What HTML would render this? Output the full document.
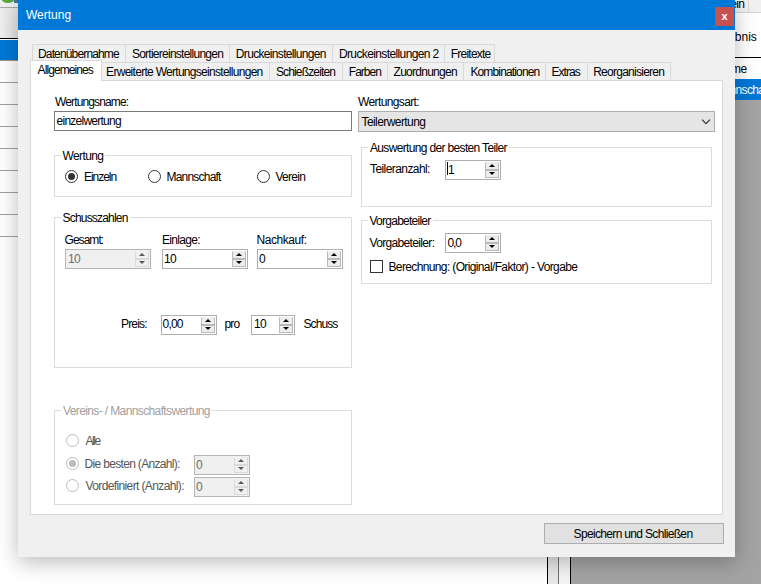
<!DOCTYPE html>
<html><head><meta charset="utf-8">
<style>
*{margin:0;padding:0;box-sizing:border-box}
html,body{width:761px;height:584px;overflow:hidden;background:#fff}
body{position:relative;font-family:"Liberation Sans",sans-serif;font-size:11px;color:#000}
.a{position:absolute}
.t{position:absolute;white-space:nowrap;font-size:12px;line-height:12px;letter-spacing:-0.62px;color:#000}
/* background app */
#bgL{left:0;top:0;width:18px;height:584px;background:#fff}
#bgR{left:735px;top:0;width:26px;height:584px;background:#a3a3a3}
#bgB{left:0;top:557px;width:761px;height:27px;background:#a3a3a3}
/* dialog */
#dlg{left:18px;top:0;width:717px;height:557px;background:#f0f0f0;box-shadow:0 5px 20px 0 rgba(0,0,0,0.27)}
#title{left:18px;top:0;width:717px;height:30px;background:#0078d7}
#close{left:715px;top:7px;width:19px;height:19px;background:#c75050;color:#fff;font-weight:bold;font-size:11px;line-height:18px;text-align:center}
/* tabs */
.tab{position:absolute;background:#f0f0f0;border:1px solid #d9d9d9;border-bottom:none;white-space:nowrap;font-size:12px;letter-spacing:-0.62px;text-align:center;line-height:16px;padding-top:1px}
#panel{left:30px;top:80px;width:693px;height:435px;background:#fff;border:1px solid #d9d9d9}
.grp{position:absolute;border:1px solid #dcdcdc}
.tb{position:absolute;border:1px solid #7a7a7a;background:#fff}
.num{position:absolute;border:1px solid #a9a9a9;background:#fff}
.spin{position:absolute;width:14px}
.rad{position:absolute;width:13px;height:13px;border-radius:50%;border:1px solid #333;background:#fff}
.rad.on::after{content:"";position:absolute;left:2px;top:2px;width:7px;height:7px;border-radius:50%;background:#333}

.num{position:absolute;border:1px solid #adadad;background:#fff}
.num .sp{position:absolute;right:1px;top:1px;width:14px;height:16px}
.num .u,.num .d{position:absolute;left:0;width:14px;height:8px;background:#ededed;border:1px solid #b9b9b9}
.num .u{top:0;border-top-color:#ededed}.num .d{top:8px}
.num .u::after{content:"";position:absolute;left:2.5px;top:0.5px;border-left:3.5px solid transparent;border-right:3.5px solid transparent;border-bottom:3.5px solid #000}
.num .d::after{content:"";position:absolute;left:2.5px;top:1px;border-left:3.5px solid transparent;border-right:3.5px solid transparent;border-top:3.5px solid #000}
.num.dis{background:#f0f0f0;border-color:#b4b4b4}
.num.dis .u,.num.dis .d{background:#f0f0f0;border-color:#dadada}
.num.dis .u{border-top-color:#f0f0f0}
.num.dis .u::after{border-bottom-color:#5a5a5a}
.num.dis .d::after{border-top-color:#5a5a5a}
.rad.dis{border-color:#bcbcbc}
.rad.dis.on::after{background:#bcbcbc}
.gl{background:#fff;padding:0 2px}
</style></head><body>
<div class="a" id="bgL"></div>
<div class="a" style="left:0;top:0;width:18px;height:7px;background:#f0f0f0"></div>
<div class="a" style="left:2px;top:-3px;width:12px;height:6px;border-radius:50%;background:#5aa83a"></div>
<div class="a" style="left:14px;top:0;width:4px;height:3px;background:#3a7aa0"></div>
<div class="a" style="left:0;top:7px;width:18px;height:1px;background:#a8a8a8"></div>
<div class="a" style="left:0;top:8px;width:18px;height:30px;background:linear-gradient(to right,#f0f0f0,#e4e4e4)"></div>
<div class="a" style="left:0;top:38px;width:18px;height:1px;background:#000"></div>
<div class="a" style="left:0;top:40px;width:18px;height:20px;background:#0078d7"></div>
<div class="a" style="left:0;top:60px;width:18px;height:1px;background:#a09488"></div>
<div class="a" style="left:0;top:82px;width:18px;height:1px;background:#a0a0a0"></div>
<div class="a" style="left:0;top:104px;width:18px;height:1px;background:#a0a0a0"></div>
<div class="a" style="left:0;top:126px;width:18px;height:1px;background:#a0a0a0"></div>
<div class="a" style="left:0;top:148px;width:18px;height:1px;background:#a0a0a0"></div>
<div class="a" style="left:0;top:170px;width:18px;height:1px;background:#a0a0a0"></div>
<div class="a" style="left:0;top:192px;width:18px;height:1px;background:#a0a0a0"></div>
<div class="a" style="left:0;top:214px;width:18px;height:1px;background:#a0a0a0"></div>
<div class="a" style="left:0;top:236px;width:18px;height:1px;background:#a0a0a0"></div>
<div class="a" id="bgR"></div>
<div class="a" style="left:735px;top:0;width:26px;height:12px;background:#f0f0f0"></div>
<div class="a" style="left:748px;top:0;width:1px;height:12px;background:#dadada"></div>
<div class="a" style="left:735px;top:12px;width:26px;height:1px;background:#d5d5d5"></div>
<div class="a" style="left:735px;top:13px;width:26px;height:44px;background:#fff"></div>
<div class="a" style="left:735px;top:57px;width:26px;height:1px;background:#000"></div>
<div class="a" style="left:735px;top:58px;width:26px;height:21px;background:#fff"></div>
<div class="a" style="left:735px;top:79px;width:26px;height:21px;background:#0078d7"></div>
<div class="t" style="left:714px;top:-2px">Verein</div>
<div class="t" style="left:709.5px;top:31px;letter-spacing:0">Ergebnis</div>
<div class="t" style="left:717px;top:63px">Name</div>
<div class="t" style="left:714px;top:84px;color:#fff">Mannschaft</div>
<div class="a" id="bgB"></div>
<div class="a" style="left:0;top:557px;width:547px;height:27px;background:#fff"></div>
<div class="a" style="left:547px;top:557px;width:1px;height:27px;background:#000"></div>
<div class="a" style="left:548px;top:557px;width:10px;height:27px;background:#e8e8e8"></div>
<div class="a" style="left:558px;top:557px;width:1px;height:27px;background:#707070"></div>
<div class="a" style="left:559px;top:557px;width:11px;height:27px;background:#f4f4f4"></div>
<div class="a" style="left:570px;top:557px;width:1px;height:27px;background:#000"></div>
<div class="a" id="dlg"></div>
<div class="a" id="title"></div>
<div class="t" style="left:26px;top:8px;font-size:12px;line-height:14px;letter-spacing:0;color:#fff">Wertung</div>
<div class="a" id="close">x</div>

<!-- back row tabs -->
<div class="tab" style="left:32px;top:44px;width:94px;height:18px"></div>
<div class="tab" style="left:125px;top:44px;width:105px;height:18px"></div>
<div class="tab" style="left:229px;top:44px;width:104px;height:18px"></div>
<div class="tab" style="left:332px;top:44px;width:113px;height:18px"></div>
<div class="tab" style="left:444px;top:44px;width:51px;height:18px"></div>
<div class="t" id="tb0" style="left:38.0px;top:48px;letter-spacing:-0.851px">Datenübernahme</div>
<div class="t" id="tb1" style="left:131.9px;top:48px;letter-spacing:-0.741px">Sortiereinstellungen</div>
<div class="t" id="tb2" style="left:235.8px;top:48px;letter-spacing:-0.666px">Druckeinstellungen</div>
<div class="t" id="tb3" style="left:338.9px;top:48px;letter-spacing:-0.615px">Druckeinstellungen 2</div>
<div class="t" id="tb4" style="left:450.8px;top:48px;letter-spacing:-0.784px">Freitexte</div>
<div class="a" id="panel"></div>
<div class="tab" style="left:101px;top:62px;width:169px;height:18px"></div>
<div class="tab" style="left:269px;top:62px;width:74px;height:18px"></div>
<div class="tab" style="left:342px;top:62px;width:46px;height:18px"></div>
<div class="tab" style="left:387px;top:62px;width:77px;height:18px"></div>
<div class="tab" style="left:463px;top:62px;width:83px;height:18px"></div>
<div class="tab" style="left:545px;top:62px;width:43px;height:18px"></div>
<div class="tab" style="left:587px;top:62px;width:84px;height:18px"></div>
<div class="t" id="tf0" style="left:106.1px;top:66px;letter-spacing:-0.71px">Erweiterte Wertungseinstellungen</div>
<div class="t" id="tf1" style="left:275.9px;top:66px;letter-spacing:-0.846px">Schießzeiten</div>
<div class="t" id="tf2" style="left:348.8px;top:66px;letter-spacing:-0.98px">Farben</div>
<div class="t" id="tf3" style="left:393.6px;top:66px;letter-spacing:-0.74px">Zuordnungen</div>
<div class="t" id="tf4" style="left:470.4px;top:66px;letter-spacing:-0.854px">Kombinationen</div>
<div class="t" id="tf5" style="left:551.5px;top:66px;letter-spacing:-0.96px">Extras</div>
<div class="t" id="tf6" style="left:593.2px;top:66px;letter-spacing:-0.742px">Reorganisieren</div>
<div class="tab" style="left:30px;top:60px;width:72px;height:21px;background:#fff"></div>
<div class="t" id="tsel" style="left:37.6px;top:64px;letter-spacing:-0.92px">Allgemeines</div>

<!-- form -->
<div class="t" id="x1" style="left:55.0px;top:96px;letter-spacing:-0.871px">Wertungsname:</div>
<div class="tb" style="left:54px;top:111px;width:298px;height:20px"></div>
<div class="t" id="x2" style="left:56.6px;top:115px;letter-spacing:-0.753px">einzelwertung</div>

<div class="t" id="x3" style="left:358.0px;top:96px;letter-spacing:-0.62px">Wertungsart:</div>
<div class="a" style="left:358px;top:111px;width:357px;height:21px;background:#e5e5e5;border:1px solid #adadad"></div>
<div class="t" id="x4" style="left:361.5px;top:116px;letter-spacing:-0.577px">Teilerwertung</div>
<svg class="a" style="left:700px;top:118px" width="12" height="9"><path d="M2 1.6 L6 5.6 L10 1.6" fill="none" stroke="#333" stroke-width="1.2"/></svg>

<!-- Wertung group -->
<div class="grp" style="left:54px;top:155px;width:298px;height:42px"></div>
<div class="t" id="x5" style="left:60.5px;top:150px;background:#fff;padding:0 2px;letter-spacing:-0.62px">Wertung</div>
<div class="rad on" style="left:65px;top:170px"></div>
<div class="t" id="x6" style="left:84.0px;top:171px;letter-spacing:-1.036px">Einzeln</div>
<div class="rad" style="left:148px;top:170px"></div>
<div class="t" id="x7" style="left:166.5px;top:171px;letter-spacing:-0.787px">Mannschaft</div>
<div class="rad" style="left:257px;top:170px"></div>
<div class="t" id="x8" style="left:275.5px;top:171px;letter-spacing:-0.72px">Verein</div>


<!-- Auswertung der besten Teiler -->
<div class="grp" style="left:361px;top:147px;width:351px;height:60px"></div>
<div class="t gl" id="x9" style="left:368.0px;top:142px;letter-spacing:-0.658px">Auswertung der besten Teiler</div>
<div class="t" id="x10" style="left:370.0px;top:163px;letter-spacing:-0.579px">Teileranzahl:</div>
<div class="num" style="left:445px;top:160px;width:56px;height:20px"><div class="sp"><div class="u"></div><div class="d"></div></div></div>
<div class="a" style="left:447px;top:162px;width:1px;height:13px;background:#000"></div>
<div class="t" style="left:448px;top:164px">1</div>

<!-- Vorgabeteiler -->
<div class="grp" style="left:361px;top:220px;width:351px;height:64px"></div>
<div class="t gl" id="x11" style="left:367.5px;top:215px;letter-spacing:-0.745px">Vorgabeteiler</div>
<div class="t" id="x12" style="left:369.5px;top:237px;letter-spacing:-0.657px">Vorgabeteiler:</div>
<div class="num" style="left:445px;top:233px;width:56px;height:20px"><div class="sp"><div class="u"></div><div class="d"></div></div></div>
<div class="t" id="x13" style="left:447.5px;top:237px;letter-spacing:-1.12px">0,0</div>
<div class="a" style="left:370px;top:260px;width:13px;height:13px;border:1px solid #333;background:#fff"></div>
<div class="t" id="x14" style="left:388.5px;top:261px;letter-spacing:-0.633px">Berechnung: (Original/Faktor) - Vorgabe</div>

<!-- Schusszahlen -->
<div class="grp" style="left:54px;top:217px;width:298px;height:151px"></div>
<div class="t gl" id="x15" style="left:60.5px;top:212px;letter-spacing:-0.802px">Schusszahlen</div>
<div class="t" id="x16" style="left:64.5px;top:234px;letter-spacing:-0.954px">Gesamt:</div>
<div class="t" id="x17" style="left:162.0px;top:234px;letter-spacing:-0.69px">Einlage:</div>
<div class="t" id="x18" style="left:256.5px;top:234px;letter-spacing:-0.435px">Nachkauf:</div>
<div class="num dis" style="left:65px;top:249px;width:86px;height:20px"><div class="sp"><div class="u"></div><div class="d"></div></div></div>
<div class="t" style="left:68px;top:253px;color:#6d6d6d">10</div>
<div class="num" style="left:162px;top:249px;width:86px;height:20px"><div class="sp"><div class="u"></div><div class="d"></div></div></div>
<div class="t" style="left:164px;top:253px">10</div>
<div class="num" style="left:257px;top:249px;width:86px;height:20px"><div class="sp"><div class="u"></div><div class="d"></div></div></div>
<div class="t" style="left:259px;top:253px">0</div>

<div class="t" id="x19" style="left:121.0px;top:318px;letter-spacing:-0.82px">Preis:</div>
<div class="num" style="left:161px;top:315px;width:56px;height:20px"><div class="sp"><div class="u"></div><div class="d"></div></div></div>
<div class="t" id="x20" style="left:162.5px;top:318px;letter-spacing:-0.788px">0,00</div>
<div class="t" id="x21" style="left:224.5px;top:318px;letter-spacing:-0.87px">pro</div>
<div class="num" style="left:251px;top:315px;width:44px;height:20px"><div class="sp"><div class="u"></div><div class="d"></div></div></div>
<div class="t" style="left:254px;top:318px">10</div>
<div class="t" id="x22" style="left:303.5px;top:318px;letter-spacing:-0.92px">Schuss</div>

<!-- Vereins- / Mannschaftswertung -->
<div class="grp" style="left:54px;top:410px;width:298px;height:95px"></div>
<div class="t gl" id="x23" style="left:61.0px;top:405px;color:#a0a0a0;letter-spacing:-0.619px">Vereins- / Mannschaftswertung</div>
<div class="rad dis" style="left:66px;top:434px"></div>
<div class="t" id="x24" style="left:85.5px;top:435px;color:#555;letter-spacing:-1.453px">Alle</div>
<div class="rad dis on" style="left:66px;top:457px"></div>
<div class="t" id="x25" style="left:84.5px;top:458px;color:#555;letter-spacing:-0.672px">Die besten (Anzahl):</div>
<div class="rad dis" style="left:66px;top:479px"></div>
<div class="t" id="x26" style="left:85.5px;top:480px;color:#555;letter-spacing:-0.621px">Vordefiniert (Anzahl):</div>
<div class="num dis" style="left:194px;top:455px;width:56px;height:20px"><div class="sp"><div class="u"></div><div class="d"></div></div></div>
<div class="t" style="left:196px;top:459px;color:#6d6d6d">0</div>
<div class="num dis" style="left:194px;top:477px;width:56px;height:20px"><div class="sp"><div class="u"></div><div class="d"></div></div></div>
<div class="t" style="left:196px;top:481px;color:#6d6d6d">0</div>

<!-- button -->
<div class="a" style="left:544px;top:523px;width:180px;height:21px;background:#e1e1e1;border:1px solid #adadad"></div>
<div class="t" id="x27" style="left:543.0px;top:528px;width:180px;text-align:center;letter-spacing:-0.665px">Speichern und Schließen</div>
</body></html>
